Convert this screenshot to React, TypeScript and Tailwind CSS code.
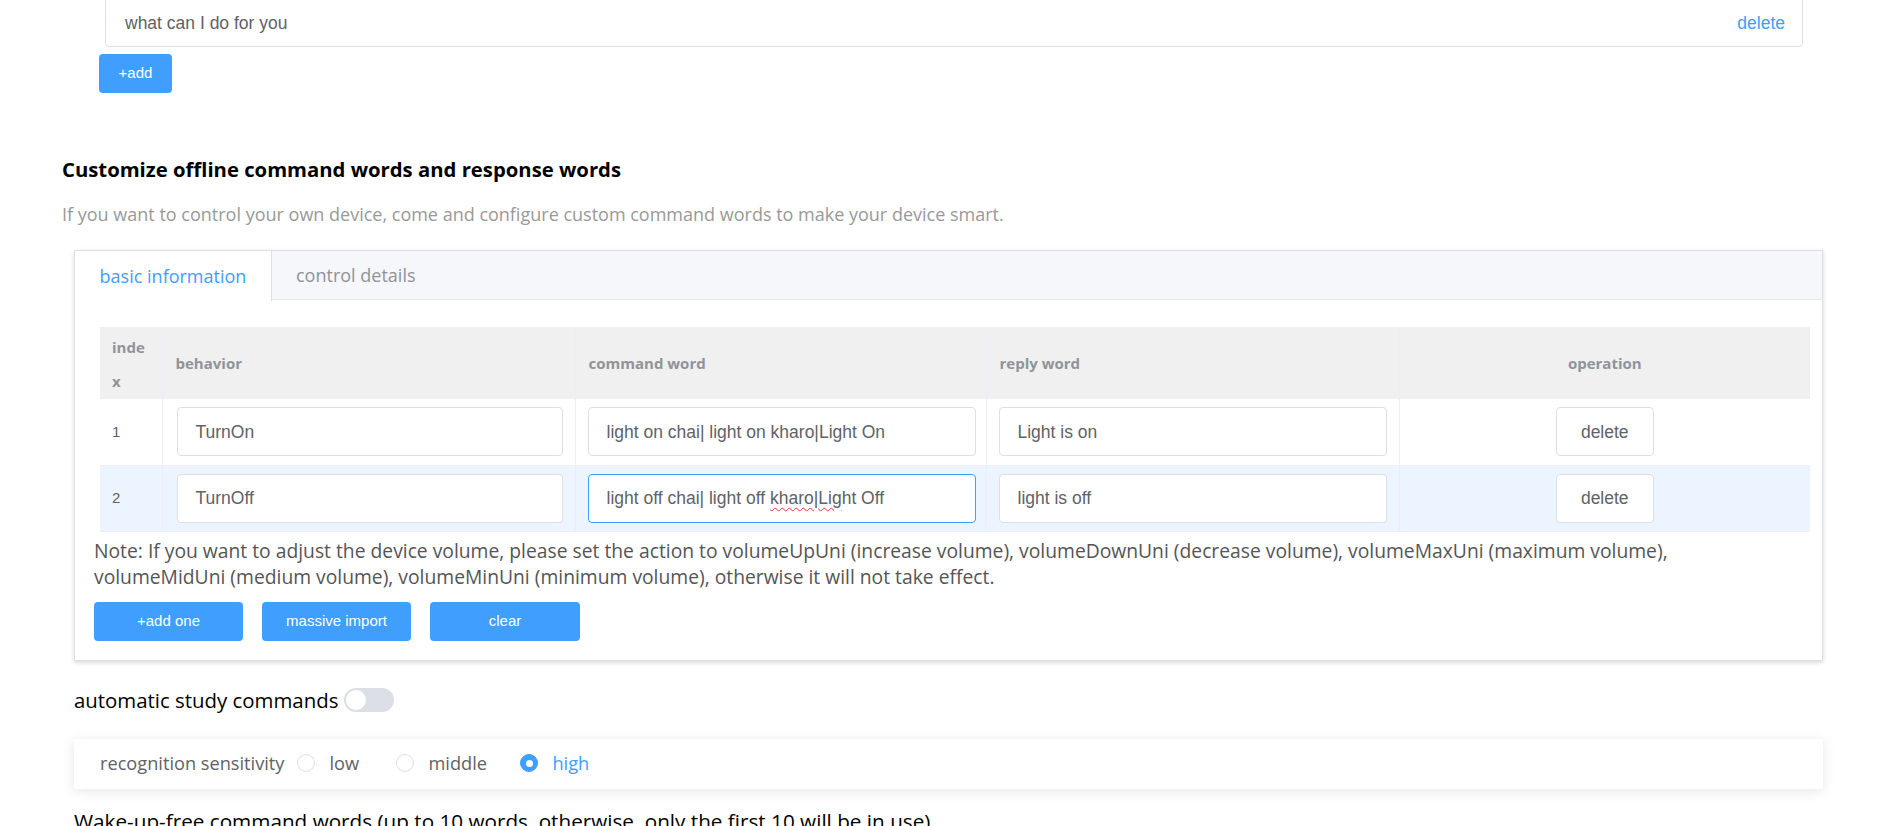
import React, { useState } from "react";

const rows = [
  { id: 1, behavior: "TurnOn", command: "light on chai| light on kharo|Light On", reply: "Light is on" },
  { id: 2, behavior: "TurnOff", command: "light off chai| light off kharo|Light Off", reply: "light is off" },
];

const sans = "font-['Open_Sans',sans-serif]";
const arial = "font-['Liberation_Sans',Arial,sans-serif]";

function BlueButton({ children, className = "" }: { children: React.ReactNode; className?: string }) {
  return (
    <button className={`h-[39px] rounded-[4px] bg-[#409eff] text-[15px] text-white ${arial} ${className}`}>
      {children}
    </button>
  );
}

function TextBox({ value, focused = false }: { value: React.ReactNode; focused?: boolean }) {
  return (
    <div
      className={`flex h-[49px] w-full items-center whitespace-nowrap rounded-[4px] border bg-white px-[18px] text-[17.5px] text-[#606266] ${arial} ${
        focused ? "border-[#409eff]" : "border-[#dcdfe6]"
      }`}
    >
      {value}
    </div>
  );
}

export default function App() {
  const [tab, setTab] = useState("basic");
  const [level, setLevel] = useState("high");
  const [study, setStudy] = useState(false);

  return (
    <div className="h-[826px] overflow-hidden bg-white pl-[74px] pr-[74px]">
      {/* reply word list (tail end) */}
      <div className="-mt-[10px] ml-[31px] mr-[20px] flex h-[57px] items-center justify-between rounded-[4px] border border-[#dcdfe6] pl-[19px] pr-[17px] pt-[10px]">
        <span className={`text-[17.5px] text-[#606266] ${arial}`}>what can I do for you</span>
        <span className={`text-[17.5px] text-[#409eff] ${arial}`}>delete</span>
      </div>
      <BlueButton className="ml-[25px] mt-[7px] w-[73px]">+add</BlueButton>

      <h2 className={`-ml-[12px] mt-[64px] text-[20.3px] font-bold leading-[24px] text-black ${sans}`}>
        Customize offline command words and response words
      </h2>
      <p className={`-ml-[12px] mt-[21px] text-[18px] leading-[24px] text-[#999] ${sans}`}>
        If you want to control your own device, come and configure custom command words to make your device smart.
      </p>

      {/* tabs card */}
      <div className="mt-[24px] border border-[#dcdfe6] bg-white shadow-[0_2px_4px_0_rgba(0,0,0,0.12),0_0_6px_0_rgba(0,0,0,0.04)]">
        <div className="flex h-[49px] border-b border-[#e4e7ed] bg-[#f5f7fa]">
          <button
            onClick={() => setTab("basic")}
            className={`-mb-px h-[50px] w-[197px] border-r border-[#dcdfe6] text-[18px] ${sans} ${
              tab === "basic" ? "bg-white text-[#409eff]" : "text-[#909399]"
            }`}
          >
            basic information
          </button>
          <button
            onClick={() => setTab("control")}
            className={`h-[49px] px-[24px] text-[18px] ${sans} ${
              tab === "control" ? "bg-white text-[#409eff]" : "text-[#909399]"
            }`}
          >
            control details
          </button>
        </div>

        <div className="pb-[19px] pl-[19px] pr-[12px] pt-[27px]">
          <table className="ml-[6px] w-[calc(100%-6px)] table-fixed border-collapse">
            <colgroup>
              <col className="w-[62px]" />
              <col className="w-[413px]" />
              <col className="w-[411px]" />
              <col className="w-[413px]" />
              <col />
            </colgroup>
            <thead>
              <tr className={`h-[72px] bg-[#f0f0f0] text-[15px] font-bold text-[#909399] ${sans}`}>
                <th className="h-[72px] border-r border-[#ebeef5] px-[12px] pb-0 pt-[2px] text-left leading-[34px]">
                  inde
                  <br />x
                </th>
                <th className="border-r border-[#ebeef5] px-[13px] text-left">behavior</th>
                <th className="border-r border-[#ebeef5] px-[13px] text-left">command word</th>
                <th className="border-r border-[#ebeef5] px-[13px] text-left">reply word</th>
                <th className="text-center">operation</th>
              </tr>
            </thead>
            <tbody>
              {rows.map((r) => (
                <tr key={r.id} className={r.id === 2 ? "bg-[#ecf5ff]" : "bg-white"}>
                  <td className={`h-[66px] border-b border-r border-[#ebeef5] px-[12px] text-[15px] text-[#606266] ${arial}`}>
                    {r.id}
                  </td>
                  <td className="border-b border-r border-[#ebeef5] pl-[14px] pr-[12px]">
                    <TextBox value={r.behavior} />
                  </td>
                  <td className="border-b border-r border-[#ebeef5] pl-[12px] pr-[10px]">
                    {r.id === 2 ? (
                      <TextBox
                        focused
                        value={
                          <span>
                            light off chai| light off{" "}
                            <span className="underline decoration-[#e53935] decoration-wavy decoration-1 underline-offset-[3px]">
                              kharo|Lig
                            </span>
                            ht Off
                          </span>
                        }
                      />
                    ) : (
                      <TextBox value={r.command} />
                    )}
                  </td>
                  <td className="border-b border-r border-[#ebeef5] pl-[12px] pr-[12px]">
                    <TextBox value={r.reply} />
                  </td>
                  <td className="border-b border-[#ebeef5] text-center">
                    <button
                      className={`h-[49px] w-[98px] rounded-[4px] border border-[#dcdfe6] bg-white text-[17.5px] text-[#606266] ${arial}`}
                    >
                      delete
                    </button>
                  </td>
                </tr>
              ))}
            </tbody>
          </table>

          <p className={`mt-[6px] text-[19.3px] leading-[26px] text-[#555] ${sans}`}>
            Note: If you want to adjust the device volume, please set the action to volumeUpUni (increase volume), volumeDownUni
            (decrease volume), volumeMaxUni (maximum volume),
            <br />
            volumeMidUni (medium volume), volumeMinUni (minimum volume), otherwise it will not take effect.
          </p>

          <div className="mt-[12px] flex gap-[19px]">
            <BlueButton className="w-[149px]">+add one</BlueButton>
            <BlueButton className="w-[149px]">massive import</BlueButton>
            <BlueButton className="w-[150px]">clear</BlueButton>
          </div>
        </div>
      </div>

      {/* automatic study */}
      <div className="mt-[27px] flex items-center gap-[6px]">
        <span className={`text-[20.4px] leading-[24px] text-black ${sans}`}>automatic study commands</span>
        <button
          onClick={() => setStudy(!study)}
          className={`flex h-[24px] w-[50px] items-center rounded-full p-[2px] ${
            study ? "justify-end bg-[#409eff]" : "justify-start bg-[#dcdfe6]"
          }`}
        >
          <span className="h-[20px] w-[20px] rounded-full bg-white" />
        </button>
      </div>

      {/* recognition sensitivity */}
      <div className="mt-[27px] flex h-[50px] items-center bg-white pl-[26px] shadow-[0_2px_12px_0_rgba(0,0,0,0.1)]">
        <span className={`mr-[13px] text-[18.2px] text-[#606266] ${sans}`}>recognition sensitivity</span>
        {[
          { k: "low", w: "w-[99px]" },
          { k: "middle", w: "w-[124px]" },
          { k: "high", w: "w-[80px]" },
        ].map(({ k, w }) => (
          <label key={k} onClick={() => setLevel(k)} className={`flex cursor-pointer items-center ${w}`}>
            <span
              className={`flex h-[18px] w-[18px] items-center justify-center rounded-full border ${
                level === k ? "border-[#409eff] bg-[#409eff]" : "border-[#dcdfe6] bg-white"
              }`}
            >
              {level === k && <span className="h-[7px] w-[7px] rounded-full bg-white" />}
            </span>
            <span className={`ml-[14px] text-[18.2px] ${sans} ${level === k ? "text-[#409eff]" : "text-[#606266]"}`}>{k}</span>
          </label>
        ))}
      </div>

      <p className={`mt-[20px] text-[20.7px] leading-[24px] text-black ${sans}`}>
        Wake-up-free command words (up to 10 words, otherwise, only the first 10 will be in use)
      </p>
    </div>
  );
}
